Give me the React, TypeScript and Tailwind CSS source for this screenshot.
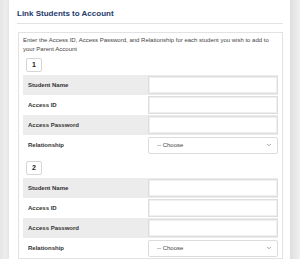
import React from 'react';
import { ChevronDown } from 'lucide-react';

const font = { fontFamily: '"Liberation Sans", Arial, sans-serif' };

const Row: React.FC<{ label: string; shaded?: boolean; select?: boolean }> = ({ label, shaded, select }) => (
  <div className={`flex h-[20px] items-center ${shaded ? 'bg-[#ececec]' : 'bg-white'}`}>
    <div className="w-[125px] pl-[5px] text-[6px] font-bold text-[#333]">{label}</div>
    {select ? (
      <div className="flex h-[17px] w-[130px] items-center justify-between rounded-[2px] border border-[#dcdcdc] bg-white pl-[8px] pr-[5px]">
        <span className="text-[6px] text-[#444]">-- Choose</span>
        <ChevronDown className="h-[6px] w-[6px] text-[#666]" strokeWidth={2.5} />
      </div>
    ) : (
      <div className="h-[18px] w-[130px] border border-[#dedede] bg-white shadow-[inset_0_0_0_1px_#efefef]"></div>
    )}
  </div>
);

const Student: React.FC<{ n: number }> = ({ n }) => (
  <div>
    <div className="ml-[3px] mb-[3px] flex h-[14px] w-[16px] items-center justify-center rounded-[2px] border border-[#d6d6d6] text-[7px] font-bold text-[#222]">
      {n}
    </div>
    <Row label="Student Name" shaded />
    <Row label="Access ID" />
    <Row label="Access Password" shaded />
    <Row label="Relationship" select />
  </div>
);

export default function App() {
  return (
    <div className="flex h-[259px] w-[300px] overflow-hidden bg-[#f4f4f4]" style={font}>
      <div className="w-[9px] bg-gradient-to-r from-[#e6e6e6] to-[#f2f2f2]"></div>
      <div className="w-[281px] bg-white pl-[8px] pr-[7px] shadow-[0_0_4px_rgba(0,0,0,0.12)]">
        <div className="pt-[8px] pb-[4px] text-[8px] font-bold leading-[11px] text-[#1e3a6b]">
          Link Students to Account
        </div>
        <div className="h-px bg-[#e2e2e2]"></div>
        <div className="mt-[8px] ml-px border border-[#e2e2e2] px-[4px] pt-[3px]">
          <p className="text-[6px] leading-[9px] text-[#444]">
            Enter the Access ID, Access Password, and Relationship for each student you wish to add to your Parent Account
          </p>
          <div className="mt-[4px] flex flex-col gap-[6px]">
            <Student n={1} />
            <Student n={2} />
          </div>
        </div>
      </div>
      <div className="w-[10px] bg-gradient-to-l from-[#f0f0f0] to-[#dedede]"></div>
    </div>
  );
}
